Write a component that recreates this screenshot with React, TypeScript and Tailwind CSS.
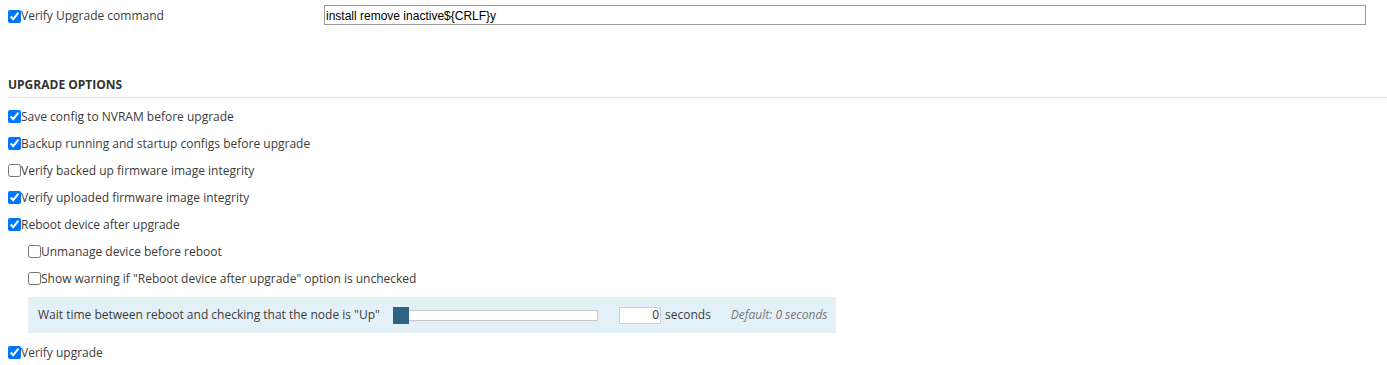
const font = "font-['Open_Sans',sans-serif]";

function CheckRow({ label, checked = false, indent = false }: { label: string; checked?: boolean; indent?: boolean }) {
  return (
    <label className={`flex h-[27px] items-center ${indent ? 'pl-[28px]' : 'pl-[8px]'}`}>
      <input type="checkbox" defaultChecked={checked} className="m-0 h-[13px] w-[13px] shrink-0" />
      <span className="text-[12px] text-[#3b3b3b]">{label}</span>
    </label>
  )
}

export default function App() {
  return (
    <div className={`${font} h-[365px] w-[1387px] bg-white`}>
      {/* Command row */}
      <div className="flex h-[25px] items-start pt-[5px]">
        <label className="flex h-[22px] w-[324px] items-center pl-[8px]">
          <input type="checkbox" defaultChecked className="m-0 h-[13px] w-[13px] shrink-0" />
          <span className="text-[12px] text-[#3b3b3b]">Verify Upgrade command</span>
        </label>
        <input
          type="text"
          defaultValue="install remove inactive${CRLF}y"
          className="h-[20px] w-[1042px] border border-[#999] px-[1px] pt-[1px] font-['Liberation_Sans',Arial,sans-serif] text-[12px] text-black outline-none"
        />
      </div>

      {/* Section header */}
      <div className="ml-[8px] mt-[51px] border-b border-[#ddd] pb-[3px]">
        <h3 className="text-[12px] font-bold leading-[18px] text-[#333]">UPGRADE OPTIONS</h3>
      </div>

      <div className="mt-[5px]">
        <CheckRow label="Save config to NVRAM before upgrade" checked />
        <CheckRow label="Backup running and startup configs before upgrade" checked />
        <CheckRow label="Verify backed up firmware image integrity" />
        <CheckRow label="Verify uploaded firmware image integrity" checked />
        <CheckRow label="Reboot device after upgrade" checked />
        <CheckRow label="Unmanage device before reboot" indent />
        <CheckRow label={'Show warning if "Reboot device after upgrade" option is unchecked'} indent />

        {/* Wait time panel */}
        <div className="ml-[28px] mt-[5px] flex h-[36px] w-[808px] items-center bg-[#e4f0f8] pl-[10px] text-[12px] text-[#3b3b3b]">
          <span className="w-[355px]">Wait time between reboot and checking that the node is "Up"</span>
          <div className="relative h-[17px] w-[205px]">
            <div className="absolute left-0 right-0 top-[3px] h-[11px] border border-[#c8c8c8] bg-white" />
            <div className="absolute left-0 top-0 h-[17px] w-[16px] bg-[#2e6483]" />
          </div>
          <input
            type="text"
            defaultValue="0"
            className="ml-[21px] h-[17px] w-[42px] border border-[#d0d0d0] bg-white px-[1px] text-right text-[12px] text-[#333] outline-none"
          />
          <span className="ml-[4px]">seconds</span>
          <span className="ml-[20px] italic text-[#777]">Default: 0 seconds</span>
        </div>

        <div className="mt-[6px]">
          <CheckRow label="Verify upgrade" checked />
        </div>
      </div>
    </div>
  )
}
